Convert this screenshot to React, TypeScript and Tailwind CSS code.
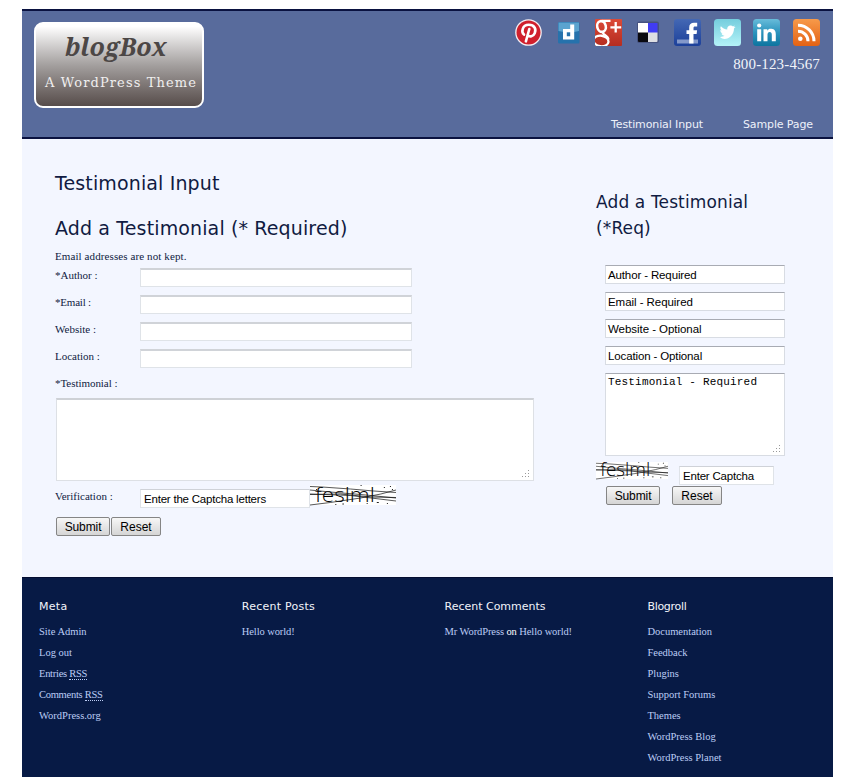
import React from 'react';

const serif = "font-['Liberation_Serif',serif]";

function Pinterest() {
  return (
    <svg width="27" height="27" viewBox="0 0 27 27">
      <circle cx="13.5" cy="13.5" r="13.3" fill="#f4eef2" />
      <circle cx="13.5" cy="13.5" r="12" fill="#d0202c" />
      <path d="M9 15.600C6.200 13.200 6.900 5.900 13.800 5.800c5.700 0 7.700 4.400 5.900 8.500-1.300 3.200-5.300 4-6.700 1.800M14.300 10l-3.400 12.300" fill="none" stroke="#fff" strokeWidth="2.600" strokeLinecap="round" />
    </svg>
  );
}

function Digg() {
  return (
    <svg width="27" height="27" viewBox="0 0 27 27">
      <rect x="3" y="3" width="21.5" height="21.5" rx="1.5" fill="#2672ac" />
      <path d="M3.5 3.5h20.5v8.5q-10 2.5-20.5 0z" fill="#5ba3cf" />
      <path fillRule="evenodd" d="M15.200 5.500h4v15H8v-10.500h7.200zM11.800 13.200v4h3.400v-4z" fill="#fff" />
    </svg>
  );
}

function GooglePlus() {
  return (
    <svg width="27" height="27" viewBox="0 0 27 27">
      <defs>
        <linearGradient id="gp" x1="0" y1="0" x2="0" y2="1">
          <stop offset="0" stopColor="#dc4a38" />
          <stop offset="1" stopColor="#b52d20" />
        </linearGradient>
        <clipPath id="gpClip">
          <rect width="27" height="27" rx="1" />
        </clipPath>
      </defs>
      <rect width="27" height="27" rx="1" fill="url(#gp)" />
      <g clipPath="url(#gpClip)" fill="none" stroke="#fff">
        <ellipse cx="6.500" cy="7.500" rx="4.300" ry="5.400" strokeWidth="2.600" transform="rotate(-14 6.500 7.500)" />
        <path d="M7 1.800h8.500M9 12.500c-4 2.500 4.500 3.500 4.500 8" strokeWidth="2.200" />
        <ellipse cx="6" cy="22" rx="7.500" ry="5.300" strokeWidth="2.300" transform="rotate(8 6 22)" />
        <path d="M20.700 3v10.500M15.400 8.300H26.200" strokeWidth="2.300" />
      </g>
    </svg>
  );
}

function Delicious() {
  return (
    <svg width="27" height="27" viewBox="0 0 27 27">
      <rect x="3" y="2.500" width="22" height="21.500" rx="2" fill="#46527f" />
      <path d="M4 4h10v10H4z" fill="#fff" />
      <path d="M14 4h9.500v10H14z" fill="#403cf4" />
      <path d="M4 13.500h10V23H5a1 1 0 0 1-1-1z" fill="#0a0a10" />
      <path d="M14 13.500h9.500V22a1 1 0 0 1-1 1H14z" fill="#dedee2" />
    </svg>
  );
}

function Facebook() {
  return (
    <svg width="27" height="27" viewBox="0 0 27 27">
      <defs>
        <linearGradient id="fb" x1="0" y1="0" x2="0" y2="1">
          <stop offset="0" stopColor="#4468b4" />
          <stop offset="1" stopColor="#1c409a" />
        </linearGradient>
      </defs>
      <rect width="27" height="27" rx="3" fill="url(#fb)" />
      <path d="M3 20.500h21v4H3z" fill="#8398ca" />
      <path d="M15.200 24.500V15h-2.700v-3.800h2.700V8.500C15.200 5.300 17 3.800 20 3.800h3.200v3.600h-2c-1.400 0-1.700.6-1.700 1.800v2h3.600l-.5 3.800h-3.100v9.500z" fill="#fff" />
    </svg>
  );
}

function Twitter() {
  return (
    <svg width="27" height="27" viewBox="0 0 27 27">
      <defs>
        <linearGradient id="tw" x1="0" y1="0" x2="0" y2="1">
          <stop offset="0" stopColor="#74cddd" />
          <stop offset="1" stopColor="#b4f3f8" />
        </linearGradient>
      </defs>
      <rect width="27" height="27" rx="3.500" fill="url(#tw)" />
      <path d="M6 18c2 .1 3.500-.5 4.500-1.200-1.500-.2-2.600-1-3-2.300h1.200C7.200 14 6.300 12.800 6.300 11.100l1.400.4C6.300 10.300 6 8.600 6.900 7.200c1.700 2 3.700 3 6.400 3.200-.5-2.300 1-4 3.300-4 1 0 1.800.4 2.400 1l2-.8-1.200 1.700 1.800-.4-1.600 1.700C19.900 15.800 15.500 20 10.500 20c-1.700 0-3.200-.7-4.500-2z" fill="#fff" />
    </svg>
  );
}

function LinkedIn() {
  return (
    <svg width="27" height="27" viewBox="0 0 27 27">
      <defs>
        <linearGradient id="li" x1="0" y1="0" x2="0" y2="1">
          <stop offset="0" stopColor="#68bcda" />
          <stop offset="0.500" stopColor="#2b93bd" />
          <stop offset="1" stopColor="#0d749f" />
        </linearGradient>
      </defs>
      <rect width="27" height="27" rx="3.500" fill="url(#li)" />
      <circle cx="6.200" cy="6.500" r="2.100" fill="#fff" />
      <path d="M4.200 10.200h4v12h-4zM10.500 10.200h3.800v1.500c1.300-2.100 3-2 4.200-1.900 3.200.3 4.300 2.400 4.300 5.400v7h-4v-6.500c0-2-.8-2.800-2-2.800-1.600 0-2.300 1.200-2.300 2.900v6.400h-4z" fill="#fff" />
    </svg>
  );
}

function Rss() {
  return (
    <svg width="27" height="27" viewBox="0 0 27 27">
      <defs>
        <linearGradient id="rs" x1="0" y1="0" x2="0" y2="1">
          <stop offset="0" stopColor="#f79a4a" />
          <stop offset="1" stopColor="#e46213" />
        </linearGradient>
      </defs>
      <rect width="27" height="27" rx="3.500" fill="url(#rs)" />
      <circle cx="7.300" cy="19.800" r="2.300" fill="#fff" />
      <path d="M5 12.200a10 10 0 0 1 10 10M5 6.200a16 16 0 0 1 16 16" fill="none" stroke="#fff" strokeWidth="3" />
    </svg>
  );
}

function Captcha({ width }: { width: number }) {
  return (
    <svg width={width} height={width === 72 ? 17 : 20} viewBox="0 0 85 20" preserveAspectRatio="none" className="shrink-0 overflow-visible">
      <rect width="85" height="20" fill="#fff" />
      <text x="5" y="16.500" fontSize="20.500" textLength="59" lengthAdjust="spacingAndGlyphs" className="font-['Open_Sans','Noto_Sans',sans-serif] font-light" fill="#000">feslml</text>
      <g stroke="#111" strokeWidth="0.700" fill="none">
        <path d="M0 1.500L12 2 40 4 63 6 85 7.500M0 5L20 7 50 9.500 85 13M0 9.500L30 9 60 12 85 12.500M0 20L20 17.500 50 13 70 9 85 5M0 9L40 10.500 85 16" />
      </g>
      <path d="M50 0h1v1h-1zM79 1h1v1h-1zM81 4h1v1h-1zM76 18h1v1h-1zM66 17h2v1h-2zM25 19h1v1h-1zM32 18.500h1.500v1H32zM73 2h1v1h-1zM56 18h1v1h-1zM6 4h1v1H6z" fill="#222" />
    </svg>
  );
}

function Grip() {
  return (
    <svg width="8" height="8" viewBox="0 0 8 8" className="mr-[3px] mb-[2px]">
      <path d="M6 0h1v1H6zM3 3h1v1H3zM6 3h1v1H6zM0 6h1v1H0zM3 6h1v1H3zM6 6h1v1H6z" fill="#999" />
    </svg>
  );
}

const button =
  "h-[19px] rounded-[2px] border border-[#858585] bg-linear-to-b from-[#f7f7f7] to-[#d5d5d5] text-center font-['Liberation_Sans',sans-serif] text-[12px] leading-[18px] text-black";

const sideInput =
  "mb-[8px] h-[19px] w-[180px] border border-[#d8dce3] border-t-[#a8abb3] bg-white pl-[2px] font-['Liberation_Sans',sans-serif] text-[11.500px] leading-[18px] text-black whitespace-nowrap";

function Field({ label, tracking }: { label: string; tracking: string }) {
  return (
    <div className="flex h-[27px]">
      <div className={`w-[85px] text-[11px] leading-[14px] ${tracking}`}>{label}</div>
      <div className="h-[19px] w-[272px] border border-t-2 border-[#dfe3e8] border-t-[#d0d3d8] bg-white" />
    </div>
  );
}

function FooterColumn({ title, tracking, children }: { title: string; tracking: string; children: React.ReactNode }) {
  return (
    <div className="w-[202.800px] shrink-0 whitespace-nowrap">
      <h3 className={`mb-[7px] font-['DejaVu_Sans',sans-serif] text-[11px] leading-[14px] text-[#f2f4fa] ${tracking}`}>{title}</h3>
      <ul className="text-[10.500px] leading-[21px] text-[#bccdf5]">{children}</ul>
    </div>
  );
}

export default function App() {
  return (
    <div className="h-[777px] w-[850px] overflow-hidden bg-white pt-[9px] pl-[22px]">
      <div className={`w-[811px] text-[#101b42] ${serif}`}>
        <header className="flex h-[130px] justify-between border-y-2 border-[#0a1240] bg-[#586b9c] pr-[13px] pl-[12px]">
          <div className="mt-[11px] h-[86px] w-[170px] rounded-[9px] border-2 border-white bg-linear-to-b from-white from-3% via-[#a4a09f] via-50% to-[#574d4b] whitespace-nowrap">
            <div className="mt-[6px] ml-[29px] font-['Noto_Serif','DejaVu_Serif',serif] text-[25px] leading-[32px] font-bold text-[#4c4746] italic tracking-[0px]">blogBox</div>
            <div className="mt-[12px] ml-[9px] font-['DejaVu_Serif',serif] text-[13px] font-light leading-[18px] tracking-[1.100px] text-[#f0efef]">A WordPress Theme</div>
          </div>
          <div className="flex flex-col items-end">
            <div className="mt-[8px] flex gap-[12.700px]">
              <Pinterest />
              <Digg />
              <GooglePlus />
              <Delicious />
              <Facebook />
              <Twitter />
              <LinkedIn />
              <Rss />
            </div>
            <div className="mt-[8px] text-[15px] leading-[20px] tracking-[0.150px] text-[#f2f4fa]">800-123-4567</div>
            <nav className="mt-[43px] mr-[7px] flex gap-[40px] font-['DejaVu_Sans',sans-serif] text-[11px] leading-[16px] tracking-[-0.120px] text-[#eef1fa]">
              <a>Testimonial Input</a>
              <a>Sample Page</a>
            </nav>
          </div>
        </header>

        <main className="flex h-[438px] bg-[#f3f6ff] pl-[33px] whitespace-nowrap">
          <section className="w-[541px] pt-[32px]">
            <h1 className="font-['DejaVu_Sans',sans-serif] text-[19px] leading-[24px] tracking-[0.130px]">Testimonial Input</h1>
            <h2 className="mt-[20px] font-['DejaVu_Sans',sans-serif] text-[19px] leading-[26px] tracking-[0.130px]">Add a Testimonial (* Required)</h2>
            <p className="mt-[8px] text-[11px] leading-[14px] tracking-[0.100px]">Email addresses are not kept.</p>
            <div className="mt-[5px]">
              <Field label="*Author :" tracking="tracking-[0px]" />
              <Field label="*Email :" tracking="tracking-[-0.200px]" />
              <Field label="Website :" tracking="tracking-[0px]" />
              <Field label="Location :" tracking="tracking-[0px]" />
            </div>
            <div className="text-[11px] leading-[14px] tracking-[-0.050px]">*Testimonial :</div>
            <div className="mt-[8px] ml-px flex h-[83px] w-[478px] items-end justify-end border border-t-2 border-[#dde0e5] border-t-[#ced1d6] bg-white">
              <Grip />
            </div>
            <div className="mt-[4px] flex h-[24px]">
              <div className="mt-[4px] w-[85px] text-[11px] leading-[14px]">Verification :</div>
              <div className="mt-[4px] h-[19px] w-[170px] border border-[#dfe3e8] border-t-[#cfd2d8] bg-white pl-[3px] font-['Liberation_Sans',sans-serif] text-[11.500px] leading-[18px] tracking-[-0.210px] text-black">Enter the Captcha letters</div>
              <Captcha width={86} />
            </div>
            <div className="mt-[8px] flex gap-[1px] pl-[1px]">
              <button className={`${button} w-[54px] tracking-[-0.100px]`}>Submit</button>
              <button className={`${button} w-[50px]`}>Reset</button>
            </div>
          </section>

          <aside className="w-[220px] pt-[50px]">
            <h2 className="font-['DejaVu_Sans',sans-serif] text-[17px] leading-[26px] tracking-[0.130px]">
              Add a Testimonial
              <br />
              (*Req)
            </h2>
            <div className="mt-[24px] ml-[9px]">
              <div className={`${sideInput} tracking-[-0.130px]`}>Author - Required</div>
              <div className={`${sideInput} tracking-[-0.050px]`}>Email - Required</div>
              <div className={`${sideInput} tracking-[-0.050px]`}>Website - Optional</div>
              <div className={`${sideInput} tracking-[-0.130px]`}>Location - Optional</div>
              <div className="flex h-[83px] w-[180px] items-end justify-between border border-[#d8dce3] border-t-[#a8abb3] bg-white pl-[2px]">
                <span className="w-[165px] self-start font-['Liberation_Mono',monospace] text-[11px] leading-[16px] tracking-[0.180px] text-black">Testimonial - Required</span>
                <Grip />
              </div>
            </div>
            <div className="mt-[6px] flex h-[24px] gap-[11px]">
              <Captcha width={72} />
              <div className="mt-[4px] h-[19px] w-[95px] border border-[#dfe3e8] border-t-[#cfd2d8] bg-white pl-[3px] font-['Liberation_Sans',sans-serif] text-[11.500px] leading-[18px] tracking-[-0.200px] text-black">Enter Captcha</div>
            </div>
            <div className="flex gap-[12px] pl-[10px]">
              <button className={`${button} w-[54px] tracking-[-0.100px]`}>Submit</button>
              <button className={`${button} w-[50px]`}>Reset</button>
            </div>
          </aside>
        </main>

        <footer className="flex h-[200px] border-t border-[#030d30] bg-[#071a45] pt-[22px] pl-[17px]">
          <FooterColumn title="Meta" tracking="tracking-[0.300px]">
            <li>Site Admin</li>
            <li>Log out</li>
            <li className="tracking-[-0.270px]">Entries <span className="border-b border-dotted border-[#bccdf5]">RSS</span></li>
            <li className="tracking-[-0.270px]">Comments <span className="border-b border-dotted border-[#bccdf5]">RSS</span></li>
            <li>WordPress.org</li>
          </FooterColumn>
          <FooterColumn title="Recent Posts" tracking="tracking-[0.250px]">
            <li className="tracking-[-0.100px]">Hello world!</li>
          </FooterColumn>
          <FooterColumn title="Recent Comments" tracking="tracking-[-0.020px]">
            <li className="tracking-[-0.100px]">Mr WordPress <span className="text-white">on</span> Hello world!</li>
          </FooterColumn>
          <FooterColumn title="Blogroll" tracking="tracking-[-0.300px]">
            <li>Documentation</li>
            <li>Feedback</li>
            <li>Plugins</li>
            <li>Support Forums</li>
            <li>Themes</li>
            <li>WordPress Blog</li>
            <li>WordPress Planet</li>
          </FooterColumn>
        </footer>
      </div>
    </div>
  );
}
